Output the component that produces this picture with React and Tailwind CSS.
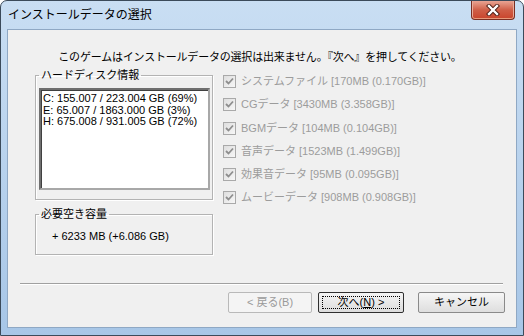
import React from 'react';

const FONT = { fontFamily: '"Liberation Sans", "Noto Sans CJK JP", sans-serif' };

const ITEMS = [
  'システムファイル [170MB (0.170GB)]',
  'CGデータ [3430MB (3.358GB)]',
  'BGMデータ [104MB (0.104GB)]',
  '音声データ [1523MB (1.499GB)]',
  '効果音データ [95MB (0.095GB)]',
  'ムービーデータ [908MB (0.908GB)]',
];

const DISKS = [
  'C: 155.007 / 223.004 GB (69%)',
  'E: 65.007 / 1863.000 GB (3%)',
  'H: 675.008 / 931.005 GB (72%)',
];

const CloseButton = () => (
  <div className="w-[44px] h-[19px] rounded-b-[4px] border border-t-0 border-[#7a2e22] bg-gradient-to-b from-[#e8a493] via-[#cf5e47] to-[#c9432b] flex items-center justify-center shadow-[inset_0_-1px_0_#e79a7c,inset_1px_0_0_#e9ad9c,inset_-1px_0_0_#e9ad9c]">
    <svg width="14" height="12" viewBox="0 0 14 12">
      <path d="M3 2 L11 10 M11 2 L3 10" stroke="#4a1a12" strokeWidth="4.2" strokeLinecap="square" />
      <path d="M3 2 L11 10 M11 2 L3 10" stroke="#ffffff" strokeWidth="2.4" strokeLinecap="square" />
    </svg>
  </div>
);

const Checkbox = () => (
  <div className="w-[13px] h-[13px] shrink-0 border border-[#a9a9a9] bg-gradient-to-br from-[#dedede] to-[#f7f7f7] flex items-center justify-center">
    <svg width="9" height="9" viewBox="0 0 9 9">
      <path d="M1 4 L3.5 6.5 L8 1.5" stroke="#8e8e8e" strokeWidth="1.8" fill="none" />
    </svg>
  </div>
);

const Button = ({ children, disabled, isDefault, className = '' }) => (
  <button
    className={`h-[21px] rounded-[2px] border flex items-center justify-center text-[11px] leading-none ${
      disabled
        ? 'border-[#b9b9b9] bg-[#f4f4f4] text-[#9a9a9a]'
        : isDefault
        ? 'border-[#2f2f2f] bg-gradient-to-b from-[#f4f4f4] to-[#dcdcdc] text-black'
        : 'border-[#8a8a8a] bg-gradient-to-b from-[#f6f6f6] to-[#dedede] text-black'
    } ${className}`}
  >
    {children}
  </button>
);

export default function App() {
  return (
    <div
      className="w-[524px] h-[336px] rounded-t-[7px] border border-[#3b4a5a] bg-gradient-to-b from-[#c9def3] to-[#a7c6e7] flex flex-col px-[6px] pb-[7px]"
      style={FONT}
    >
      {/* title bar */}
      <div className="h-[28px] flex items-start justify-between shrink-0">
        <span className="pl-[1px] pt-[6px] text-[12px] leading-[16px] text-black">インストールデータの選択</span>
        <div className="mr-[2px]">
          <CloseButton />
        </div>
      </div>

      {/* client */}
      <div className="flex-1 border border-[#8fa8c4] bg-[#f0f0f0] flex flex-col text-[11px] text-black">
        <p className="mt-[20px] h-[14px] leading-[14px] text-center pr-[4px] tracking-[-0.2px]">
          このゲームはインストールデータの選択は出来ません。『次へ』を押してください。
        </p>

        <div className="mt-[4px] ml-[27px] flex">
          <div className="w-[178px] flex flex-col gap-[7px]">
            <fieldset className="border border-[#b3b3b3] shadow-[inset_1px_1px_0_#ffffff,1px_1px_0_#ffffff] pl-[3px] pr-[2px] pb-[9px]">
              <legend className="px-[2px] leading-[14px]">ハードディスク情報</legend>
              <div className="mt-[6px] h-[102px] bg-white border-2 border-t-[#6f6f6f] border-l-[#6f6f6f] border-r-[#a8a8a8] border-b-[#a8a8a8] shadow-[inset_1px_1px_0_#404040] pl-[2px] pt-[3px] leading-[11.5px]">
                {DISKS.map((d) => (
                  <div key={d}>{d}</div>
                ))}
              </div>
            </fieldset>
            <fieldset className="border border-[#b3b3b3] shadow-[inset_1px_1px_0_#ffffff,1px_1px_0_#ffffff] pl-[4px] pt-[8px] pb-[11px]">
              <legend className="ml-[-1px] px-[2px] leading-[14px]">必要空き容量</legend>
              <div className="pl-[12px] leading-[14px]">+ 6233 MB (+6.086 GB)</div>
            </fieldset>
          </div>

          <div className="ml-[10px] pt-[7px] flex flex-col gap-[10.3px] text-[#9c9c9c]">
            {ITEMS.map((it) => (
              <div key={it} className="h-[13px] flex items-center gap-[5px]">
                <Checkbox />
                <span className="leading-[13px] whitespace-nowrap">{it}</span>
              </div>
            ))}
          </div>
        </div>

        <div className="mt-[28px] ml-[12px] mr-[13px] h-[2px] border-t border-[#a0a0a0] border-b border-b-white" />

        <div className="mt-[7px] flex justify-end pr-[11px]">
          <Button disabled className="w-[84px]">&lt; 戻る(B)</Button>
          <Button isDefault className="w-[86px] ml-[6px] p-[3px]">
            <span className="w-full h-full border border-dotted border-black flex items-center justify-center">
              次へ(<span className="underline">N</span>) &gt;
            </span>
          </Button>
          <Button className="w-[87px] ml-[14px]">キャンセル</Button>
        </div>
      </div>
    </div>
  );
}
